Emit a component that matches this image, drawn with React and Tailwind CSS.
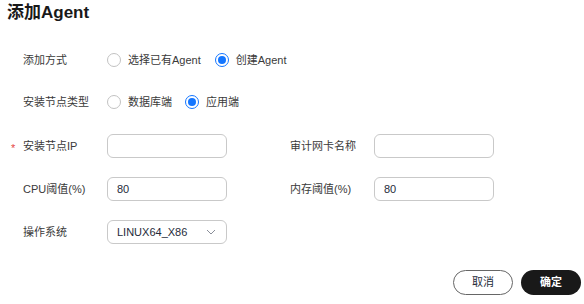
import React from "react";

const font = { fontFamily: '"Liberation Sans", "Noto Sans CJK SC", sans-serif' };

function Radio({ checked, label }) {
  return (
    <label className="flex items-center gap-[7px] cursor-pointer">
      <span
        className={
          "w-[14px] h-[14px] rounded-full border flex items-center justify-center " +
          (checked ? "border-[#1476ff]" : "border-[#c2c2c2]")
        }
      >
        {checked && <span className="w-[8px] h-[8px] rounded-full bg-[#1476ff]" />}
      </span>
      <span>{label}</span>
    </label>
  );
}

function Field({ label, required, value, className = "" }) {
  return (
    <div className={"flex items-center " + className}>
      <span className="relative w-[84px] shrink-0">
        {required && (
          <span className="absolute -left-[12px] top-[2px] text-[#e54545] text-[11px]">*</span>
        )}
        {label}
      </span>
      <div className="w-[120px] h-6 rounded-[6px] border border-[#c9c9c9] flex items-center px-[9px] text-[#252b3a]">
        {value}
      </div>
    </div>
  );
}

export default function App() {
  return (
    <div className="w-[584px] h-[304px] bg-white text-[11px] text-[#3a3a3a]" style={font}>
      <h1 className="pl-[7px] pt-[1px] h-[25px] leading-6 text-[17px] font-bold text-[#191919]">添加Agent</h1>

      <div className="pl-[23px]">
        {/* add type */}
        <div className="mt-[23px] h-6 flex items-center">
          <span className="w-[84px]">添加方式</span>
          <div className="flex items-center gap-[14px]">
            <Radio label="选择已有Agent" />
            <Radio checked label="创建Agent" />
          </div>
        </div>

        {/* node type */}
        <div className="mt-[18px] h-6 flex items-center">
          <span className="w-[84px]">安装节点类型</span>
          <div className="flex items-center gap-[13px]">
            <Radio label="数据库端" />
            <Radio checked label="应用端" />
          </div>
        </div>

        <div className="mt-[20px] flex">
          <Field label="安装节点IP" required />
          <Field label="审计网卡名称" className="ml-[63px]" />
        </div>

        <div className="mt-[19px] flex">
          <Field label="CPU阈值(%)" value="80" />
          <Field label="内存阈值(%)" value="80" className="ml-[63px]" />
        </div>

        <div className="mt-[19px] flex items-center">
          <span className="w-[84px]">操作系统</span>
          <div className="w-[120px] h-6 rounded-[6px] border border-[#c9c9c9] flex items-center justify-between pl-[9px] pr-[10px] text-[#252b3a]">
            <span>LINUX64_X86</span>
            <svg width="10" height="6" viewBox="0 0 10 6" fill="none">
              <path d="M1 1l4 4 4-4" stroke="#8a8e99" strokeWidth="1" />
            </svg>
          </div>
        </div>
      </div>

      <div className="mt-[26px] flex justify-end gap-[8px] pr-[3px]">
        <button className="w-[60px] h-[25px] rounded-full border border-[#666] bg-white text-[#252b3a] text-[11px]">
          取消
        </button>
        <button className="w-[60px] h-[25px] rounded-full bg-[#191919] text-white text-[11px] font-bold">
          确定
        </button>
      </div>
    </div>
  );
}
